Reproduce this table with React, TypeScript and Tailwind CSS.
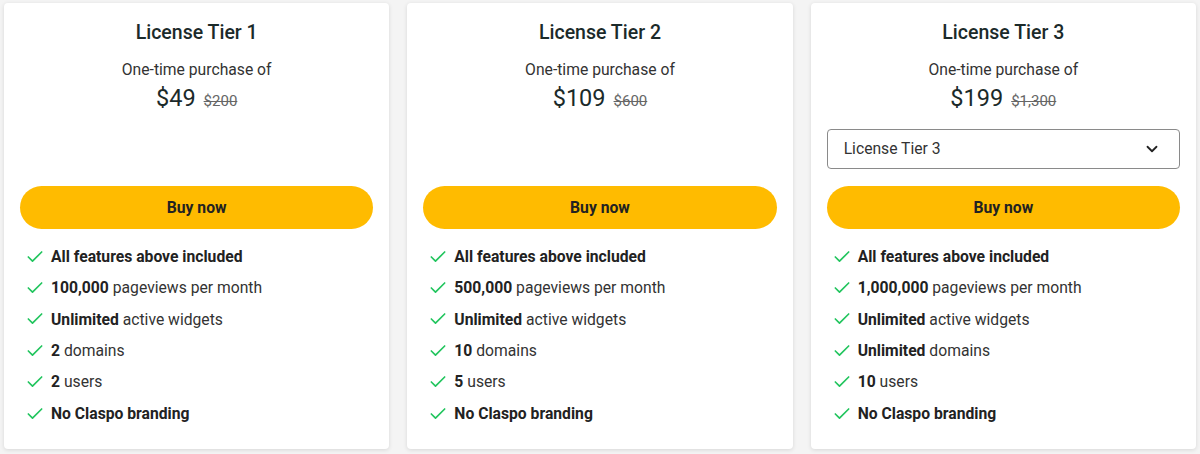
import { Check, ChevronDown } from 'lucide-react'

type Feature = { bold?: string; rest?: string }

const tiers: {
  name: string
  price: string
  old: string
  select?: boolean
  features: Feature[]
}[] = [
  {
    name: 'License Tier 1',
    price: '$49',
    old: '$200',
    features: [
      { bold: 'All features above included' },
      { bold: '100,000', rest: ' pageviews per month' },
      { bold: 'Unlimited', rest: ' active widgets' },
      { bold: '2', rest: ' domains' },
      { bold: '2', rest: ' users' },
      { bold: 'No Claspo branding' },
    ],
  },
  {
    name: 'License Tier 2',
    price: '$109',
    old: '$600',
    features: [
      { bold: 'All features above included' },
      { bold: '500,000', rest: ' pageviews per month' },
      { bold: 'Unlimited', rest: ' active widgets' },
      { bold: '10', rest: ' domains' },
      { bold: '5', rest: ' users' },
      { bold: 'No Claspo branding' },
    ],
  },
  {
    name: 'License Tier 3',
    price: '$199',
    old: '$1,300',
    select: true,
    features: [
      { bold: 'All features above included' },
      { bold: '1,000,000', rest: ' pageviews per month' },
      { bold: 'Unlimited', rest: ' active widgets' },
      { bold: 'Unlimited', rest: ' domains' },
      { bold: '10', rest: ' users' },
      { bold: 'No Claspo branding' },
    ],
  },
]

export default function App() {
  return (
    <div
      className="w-[1200px] h-[454px] bg-[#f4f4f4] px-1 pt-[3px] text-[#222]"
      style={{ fontFamily: 'Roboto, "Noto Sans", sans-serif' }}
    >
      <div className="grid grid-cols-3 gap-[18px]">
        {tiers.map((t) => (
          <div
            key={t.name}
            className="bg-white rounded-[4px] shadow-[0_1px_4px_rgba(0,0,0,0.12)] h-[446px] px-4 pt-[18px] flex flex-col"
          >
            {/* Heading */}
            <h2 className="text-center text-[19.5px] leading-6 font-medium text-[#1b2a2a]">
              {t.name}
            </h2>
            <p className="mt-[15px] text-center text-[15.7px] leading-5 text-[#333]">
              One-time purchase of
            </p>
            <div className="mt-[4px] flex items-baseline justify-center gap-2 h-[28px] leading-7">
              <span className="text-[23.5px] text-[#1b2a2a]">{t.price}</span>
              <span className="text-[15px] text-[#666] line-through">{t.old}</span>
            </div>

            {/* Select slot */}
            <div className="mt-[17px] h-[40px]">
              {t.select && (
                <div className="h-[40px] border border-[#8a8a8a] rounded-[4px] flex items-center justify-between pl-4 pr-[18px] text-[15.7px] text-[#333]">
                  License Tier 3
                  <ChevronDown className="w-[18px] h-[18px] text-[#222]" strokeWidth={2.4} />
                </div>
              )}
            </div>

            <button className="mt-[17px] h-[43px] w-full rounded-full bg-[#ffbb00] text-[15.7px] font-bold text-[#222]">
              Buy now
            </button>

            {/* Features */}
            <ul className="mt-[12px] pl-[5px]">
              {t.features.map((f, i) => (
                <li key={i} className="flex items-center h-[31.4px] text-[15.7px]">
                  <Check className="w-5 h-5 text-[#22c55e] shrink-0 mr-[6px]" strokeWidth={2} />
                  <span>
                    <span className="font-bold">{f.bold}</span>
                    {f.rest && <span className="text-[#333]">{f.rest}</span>}
                  </span>
                </li>
              ))}
            </ul>
          </div>
        ))}
      </div>
    </div>
  )
}
